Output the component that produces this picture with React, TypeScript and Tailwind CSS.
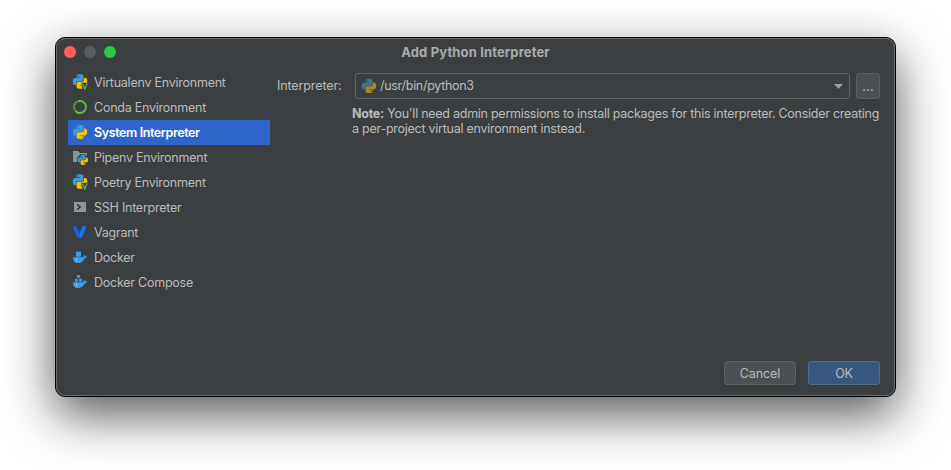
import React from "react";

const BLUE =
  "M14.25.18l.9.2.73.26.59.3.45.32.34.34.25.34.16.33.1.3.04.26.02.2-.01.13V8.5l-.05.63-.13.55-.21.46-.26.38-.3.31-.33.25-.35.19-.35.14-.33.1-.3.07-.26.04-.21.02H8.77l-.69.05-.59.14-.5.22-.41.27-.33.32-.27.35-.2.36-.15.37-.1.35-.07.32-.04.27-.02.21v3.06H3.17l-.21-.03-.28-.07-.32-.12-.35-.18-.36-.26-.36-.36-.35-.46-.32-.59-.28-.73-.21-.88-.14-1.05-.05-1.23.06-1.22.16-1.04.24-.87.32-.71.36-.57.4-.44.42-.33.42-.24.4-.16.36-.1.32-.05.24-.01h.16l.06.01h8.16v-.83H6.18l-.01-2.75-.02-.37.05-.34.11-.31.17-.28.25-.26.31-.23.38-.2.44-.18.51-.15.58-.12.64-.1.71-.06.77-.04.84-.02 1.27.05zm-6.3 1.98l-.23.33-.08.41.08.41.23.34.33.22.41.09.41-.09.33-.22.23-.34.08-.41-.08-.41-.23-.33-.33-.22-.41-.09-.41.09z";
const YELLOW =
  "M21.1 6.11l.28.06.32.12.35.18.36.27.36.35.35.47.32.59.28.73.21.88.14 1.04.05 1.23-.06 1.23-.16 1.04-.24.86-.32.71-.36.57-.4.45-.42.33-.42.24-.4.16-.36.09-.32.05-.24.02-.16-.01h-8.22v.82h5.84l.01 2.76.02.36-.05.34-.11.31-.17.29-.25.25-.31.24-.38.2-.44.17-.51.15-.58.13-.64.09-.71.07-.77.04-.84.01-1.27-.04-1.07-.14-.9-.2-.73-.25-.59-.3-.45-.33-.34-.34-.25-.34-.16-.33-.1-.3-.04-.25-.02-.2.01-.13v-5.34l.05-.64.13-.54.21-.46.26-.38.3-.32.33-.24.35-.2.35-.14.33-.1.3-.06.26-.04.21-.02.13-.01h5.84l.69-.05.59-.14.5-.21.41-.28.33-.32.27-.35.2-.36.15-.36.1-.35.07-.32.04-.28.02-.21V6.07h2.09l.14.01zm-6.47 14.25l-.23.33-.08.41.08.41.23.33.33.23.41.08.41-.08.33-.23.23-.33.08-.41-.08-.41-.23-.33-.33-.23-.41-.08-.41.08z";

function Snake({ transform }: { transform: string }) {
  return (
    <g transform={transform}>
      <path d={BLUE} fill="#3f9bd0" />
      <path d={YELLOW} fill="#f6c00f" />
    </g>
  );
}

function Icon({ children, className = "" }: { children: React.ReactNode; className?: string }) {
  return (
    <svg viewBox="0 0 16 16" className={`h-4 w-4 shrink-0 ${className}`}>
      {children}
    </svg>
  );
}

const PythonIcon = ({ className = "" }: { className?: string }) => (
  <Icon className={className}>
    <Snake transform="translate(1 1) scale(.585)" />
  </Icon>
);

const VenvIcon = () => (
  <Icon>
    <Snake transform="translate(.8 .3) scale(.6)" />
    <path d="M9.200 8.800H16V16h-5z" fill="#3c3f41" />
    <path d="M10.500 9.600l2.300 5.500 2.400-5.500" fill="none" stroke="#62b543" strokeWidth="1.200" />
  </Icon>
);

const CondaIcon = () => (
  <Icon>
    <circle cx="8" cy="8" r="6" fill="none" stroke="#62b543" strokeWidth="2" strokeDasharray="25 1 1.6 .8 1.6 .8 1.6 .8 1.6 .8 1.6 1" transform="rotate(-100 8 8)" />
  </Icon>
);

const PipenvIcon = () => (
  <Icon>
    <path d="M1 2h5l2 2h7v9H1z" fill="#87939a" />
    <path d="M8.200 5.200h4.800L16 8v8H8.500L5.200 13V8.500z" fill="#3c3f41" />
    <Snake transform="translate(6 6) scale(.415)" />
  </Icon>
);

const SshIcon = () => (
  <Icon>
    <path d="M2 3h12v10H2z" fill="#8b979e" />
    <path d="M5.200 5.200L8.100 8 5.200 10.800" fill="none" stroke="#303537" strokeWidth="1.500" />
  </Icon>
);

const VagrantIcon = () => (
  <Icon>
    <path d="M1 2.700L3.300 1.700l1.900 1v1.300L7.500 9.500v5L5 13.200 1 4.200z" fill="#1460df" />
    <path d="M14 2.700l-2.300-1-1.900 1v1.300L7.500 9.500v5L10 13.200 14 4.200z" fill="#1674f5" />
  </Icon>
);

const Whale = () => (
  <>
    <path d="M1 8.200h10.700c-.3-1.100 0-1.900.6-2.500.7.5.9 1.100.9 1.700.7-.1 1.300 0 1.800.3-.5 1-1.400 1.500-2.300 1.500C11.500 12.300 9.300 14 6.200 14 2.600 14 .8 11.800 1 8.200z" fill="#389ff0" />
    <circle cx="4.600" cy="10.200" r=".6" fill="#d5e8f3" />
    <path d="M2.500 12.500c1.500.2 2.600-.1 3.500-.7" fill="none" stroke="#a0cbe2" strokeWidth=".4" />
  </>
);

const DockerIcon = () => (
  <Icon>
    <path d="M4 2.700h5v5H4z" fill="#389ff0" />
    <Whale />
  </Icon>
);

const ComposeIcon = () => (
  <Icon>
    <path d="M5 1h3v2.700H5zM3 4.800h2.800v2.900H3zM7 4.800h2.800v2.900H7z" fill="#389ff0" />
    <Whale />
  </Icon>
);

const items = [
  { label: "Virtualenv Environment", icon: <VenvIcon /> },
  { label: "Conda Environment", icon: <CondaIcon /> },
  { label: "System Interpreter", icon: <PythonIcon />, selected: true },
  { label: "Pipenv Environment", icon: <PipenvIcon /> },
  { label: "Poetry Environment", icon: <VenvIcon /> },
  { label: "SSH Interpreter", icon: <SshIcon /> },
  { label: "Vagrant", icon: <VagrantIcon /> },
  { label: "Docker", icon: <DockerIcon /> },
  { label: "Docker Compose", icon: <ComposeIcon /> },
];

export default function App() {
  return (
    <div className="h-[470px] w-[951px] overflow-hidden bg-white pt-[37px] pl-[55px] font-['Inter',sans-serif] text-[12.5px] tracking-[-0.24px] text-[#bbbbbb]">
      <div className="h-[360px] w-[841px] rounded-[10px] border border-black bg-[#3c3f41] shadow-[0_18px_50px_rgba(0,0,0,0.66)]">
        <div className="flex h-[358px] w-[839px] flex-col rounded-[9px] border border-[#67696a]">
          <header className="relative flex h-[26px] shrink-0 items-center justify-center">
            <div className="absolute top-[7px] left-[7px] flex gap-2">
              <span className="h-3 w-3 rounded-full bg-[#ff5f57]" />
              <span className="h-3 w-3 rounded-full bg-[#5b5c5e]" />
              <span className="h-3 w-3 rounded-full bg-[#2bc840]" />
            </div>
            <h1 className="pt-px text-[13px] font-bold tracking-[0.14px] text-[#a9abac]">Add Python Interpreter</h1>
          </header>
          <div className="flex min-h-0 flex-1 pt-[5px] pl-[11px]">
            <ul className="w-[202px] shrink-0">
              {items.map((it) => (
                <li
                  key={it.label}
                  className={`flex h-[25px] items-start gap-[6px] pt-1 pl-1 whitespace-nowrap ${it.selected ? "bg-[#2f65ca] font-semibold tracking-[-0.4px] text-white" : ""}`}
                >
                  {it.icon}
                  <span className="leading-[18px]">{it.label}</span>
                </li>
              ))}
            </ul>
            <main className="flex min-w-0 flex-1 flex-col pt-[3px] pr-[14px] pl-[7px]">
              <div className="flex items-center">
                <label className="w-[78px] shrink-0 tracking-[-0.12px]">Interpreter:</label>
                <div className="flex h-[26px] w-[495px] shrink-0 items-center rounded-[3px] border border-[#646464] pr-[6px] pl-[5px]">
                  <PythonIcon className="opacity-60" />
                  <span className="ml-[3px] flex-1 tracking-[-0.3px]">/usr/bin/python3</span>
                  <svg viewBox="0 0 9 5" className="h-[5px] w-[9px]">
                    <path d="M0 0h9L4.500 5z" fill="#9b9d9e" />
                  </svg>
                </div>
                <button className="ml-[6px] h-[26px] w-6 shrink-0 rounded-[3px] border border-[#5e6060] bg-[#4c5052] pt-[2px] tracking-[0.3px] shadow-[0_1px_1px_#36393b]">...</button>
              </div>
              <p className="mt-[7px] ml-[75px] leading-[15px] tracking-[-0.26px] whitespace-nowrap">
                <b>Note:</b> You'll need admin permissions to install packages for this interpreter. Consider creating
                <br />a per-project virtual environment instead.
              </p>
              <footer className="mt-auto mb-[10px] flex justify-end gap-3">
                <button className="h-6 w-[72px] rounded-[3px] border border-[#5e6060] bg-[#4c5052] pt-[2px] tracking-[-0.1px] shadow-[0_1px_1px_#36393b]">Cancel</button>
                <button className="h-6 w-[72px] rounded-[3px] border border-[#4c708c] bg-[#365880] pt-[2px] shadow-[0_1px_1px_#36393b]">OK</button>
              </footer>
            </main>
          </div>
        </div>
      </div>
    </div>
  );
}
